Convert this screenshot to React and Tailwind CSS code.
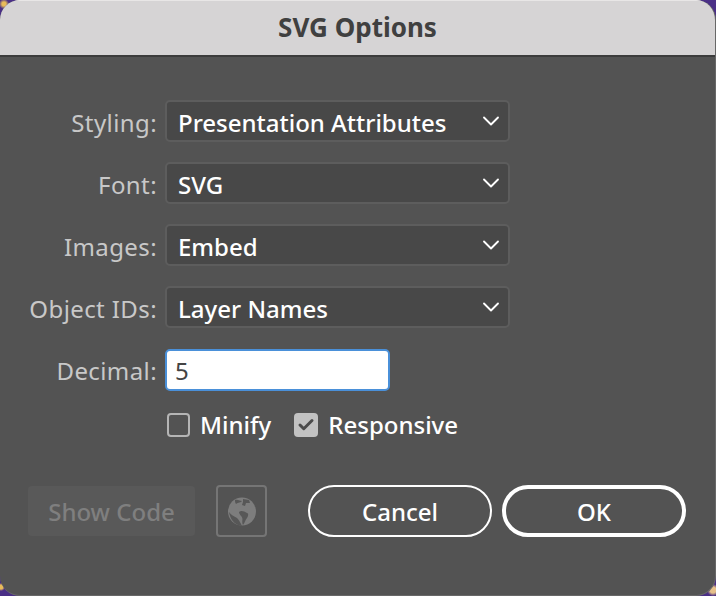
import React from 'react'
import { ChevronDown, Check } from 'lucide-react'

const font = { fontFamily: '"Noto Sans", sans-serif' }

const SelectRow = ({ label, value }) => (
  <div className="flex items-center">
    <span className="w-[157px] pt-[4px] text-right text-[24px] leading-[34px] text-[#c8c8c8] tracking-[0.4px]">{label}</span>
    <div className="ml-2 flex h-[42px] w-[345px] items-center justify-between rounded-[5px] border-2 border-[#5d5d5d] bg-[#484848] pl-[11px] pr-[3px]">
      <span className="pt-[4px] text-[24px] leading-[34px] font-medium text-white">{value}</span>
      <ChevronDown size={28} strokeWidth={1.6} className="text-white" />
    </div>
  </div>
)

const Globe = () => (
  <svg width="28" height="29" viewBox="0 0 28 29">
    <circle cx="14" cy="14.5" r="14" fill="#7d7d7d" />
    <path d="M7 3c3-1 5 1 7 1-1 2-4 1-6 3-1-1-1-3-1-4zM15 2l6 1 1 3-4 0-1 3-3-1 1-3zM1 15c2 3 5 4 8 6 2 2 3 4 5 8l-4-1C5 26 2 21 1 15zM11 15c2-2 5-1 8 1 2 0 1 4 0 5-2 2-2 5-4 7-2-4 1-6-2-9-1-1-2-3-2-4z" fill="#575757" />
  </svg>
)

export default function App() {
  return (
    <div
      className="h-[596px] w-[716px] overflow-hidden bg-[#4a2f86] bg-[radial-gradient(circle_at_4px_4px,#e8bb5a_0,#e8bb5a_2px,transparent_5px),radial-gradient(circle_at_713px_590px,#e6c08a_0,#e6c08a_3px,transparent_6px),radial-gradient(circle_at_1px_587px,#e8bb5a_0,#e8bb5a_2px,transparent_4px)]"
      style={font}
    >
      <div className="flex h-full flex-col overflow-hidden rounded-[20px] border-b border-r border-[#686868] bg-[#535353]">
        <div className="flex h-[57px] shrink-0 items-center justify-center border-t border-b-2 border-t-[#e8e6e6] border-b-[#3c3c3c] bg-[#d6d4d5] pb-[2px]">
          <span className="text-[26px] font-bold text-[#404040]">SVG Options</span>
        </div>
        <div className="flex flex-1 flex-col pt-[43px]">
          <div className="flex flex-col gap-5">
            <SelectRow label="Styling:" value="Presentation Attributes" />
            <SelectRow label="Font:" value="SVG" />
            <SelectRow label="Images:" value="Embed" />
            <SelectRow label="Object IDs:" value="Layer Names" />
          </div>
          <div className="mt-[21px] flex items-center">
            <span className="w-[157px] pt-[2px] text-right text-[24px] leading-[34px] text-[#c8c8c8] tracking-[0.4px]">Decimal:</span>
            <div className="ml-2 flex h-[42px] w-[225px] items-center rounded-[5px] border-2 border-[#4a90d9] bg-white pl-[8px] pt-[2px] text-[24px] leading-[34px] text-[#444444]">
              5
            </div>
          </div>
          <div className="ml-[167px] mt-[20px] flex h-[28px] items-center">
            <div className="h-[24px] w-[23px] rounded-[4px] border-2 border-[#b5b5b5]" />
            <span className="ml-[10px] text-[24px] leading-[34px] font-medium text-white">Minify</span>
            <div className="ml-[23px] flex h-[24px] w-[24px] items-center justify-center rounded-[4px] bg-[#c2c2c2]">
              <Check size={18} strokeWidth={4} className="text-[#4c4c4c]" />
            </div>
            <span className="ml-[10px] text-[24px] leading-[34px] font-medium text-white">Responsive</span>
          </div>
          <div className="ml-[28px] mt-[46px] flex items-center">
            <div className="flex h-[50px] w-[167px] items-center justify-center rounded-[4px] bg-[#595959] pt-[2px] text-[24px] leading-[34px] font-medium text-[#7f7f7f]">
              Show Code
            </div>
            <div className="ml-[21px] flex h-[52px] w-[51px] items-center justify-center rounded-[4px] border-2 border-[#757575]">
              <Globe />
            </div>
            <div className="ml-[41px] flex h-[52px] w-[184px] items-center justify-center rounded-full border-2 border-white pt-[2px] text-[24px] leading-[34px] font-medium text-white">
              Cancel
            </div>
            <div className="ml-[10px] flex h-[52px] w-[184px] items-center justify-center rounded-full border-4 border-white pt-[2px] text-[24px] leading-[34px] font-medium text-white">
              OK
            </div>
          </div>
        </div>
      </div>
    </div>
  )
}
